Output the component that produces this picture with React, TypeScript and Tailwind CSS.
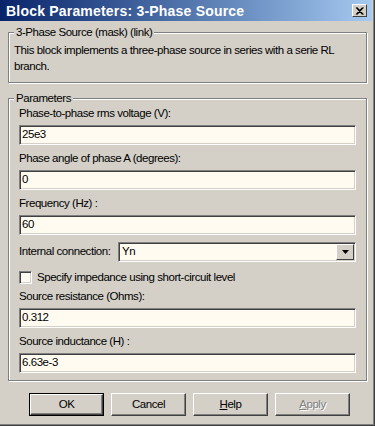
import React from "react";

const FONT = { fontFamily: '"Liberation Sans", Arial, sans-serif' };

// sunken field edge (Win2000 classic)
const sunken =
  "border border-t-[#808080] border-l-[#808080] border-b-white border-r-white shadow-[inset_1px_1px_0_#404040,inset_-1px_-1px_0_#d4d0c8]";

// dialog text: a touch condensed like the original Tahoma rendering
const txt = "text-[11.5px] tracking-[-0.45px] text-black";

function GroupBox({
  title,
  className,
  children,
}: {
  title: string;
  className?: string;
  children: React.ReactNode;
}) {
  return (
    <div
      className={`relative border border-[#808080] shadow-[inset_1px_1px_0_#fff,1px_1px_0_#fff] ${className ?? ""}`}
    >
      {/* legend sits on the etched line */}
      <span className={`absolute -top-[9px] left-[5px] bg-[#d4d0c8] px-[2px] leading-[16px] ${txt}`}>
        {title}
      </span>
      {children}
    </div>
  );
}

function Field({ label, value }: { label: string; value: string }) {
  return (
    <div className="flex flex-col">
      <div className={`h-[16px] leading-[16px] mb-[4px] ${txt}`}>{label}</div>
      <div className={`h-[20px] bg-[#fffbf0] ${sunken} flex items-center px-[2px] ${txt}`}>
        {value}
      </div>
    </div>
  );
}

function Button({
  children,
  isDefault,
}: {
  children: React.ReactNode;
  isDefault?: boolean;
}) {
  return (
    <div className={`w-[75px] h-[23px] ${isDefault ? "border border-black" : ""}`}>
      <div
        className={`h-full w-full bg-[#d4d0c8] border border-t-white border-l-white border-b-[#404040] border-r-[#404040] shadow-[inset_-1px_-1px_0_#808080] flex items-center justify-center ${txt}`}
      >
        {children}
      </div>
    </div>
  );
}

export default function App() {
  return (
    <div
      style={FONT}
      className="w-[375px] h-[426px] bg-[#d4d0c8] flex flex-col border-r border-r-[#404040] border-b border-b-[#404040] shadow-[inset_-1px_-1px_0_#808080] overflow-hidden"
    >
      {/* Title bar */}
      <div className="h-[21px] mr-[2px] flex items-center justify-between bg-gradient-to-r from-[#0a246a] to-[#a6caf0] pl-[6px] pr-[5px]">
        <span className="text-white font-bold text-[14px] tracking-[0.2px] leading-none">
          Block Parameters: 3-Phase Source
        </span>
        <div className="w-[15px] h-[13px] bg-[#d4d0c8] border border-t-white border-l-white border-b-[#404040] border-r-[#404040] flex items-center justify-center">
          <svg width="9" height="8" viewBox="0 0 9 8">
            <path d="M1 0.5 L7.5 7.5 M2 0.5 L8.5 7.5 M7.5 0.5 L1 7.5 M8.5 0.5 L2 7.5" stroke="#000" strokeWidth="1.1" />
          </svg>
        </div>
      </div>

      <div className="flex flex-col px-[8px] pr-[7px]">
        <GroupBox title="3-Phase Source (mask) (link)" className="mt-[11px] h-[51px]">
          <p className={`pl-[5px] pt-[9px] leading-[16px] ${txt}`}>
            This block implements a three-phase source in series with a serie RL
            <br />
            branch.
          </p>
        </GroupBox>

        <GroupBox title="Parameters" className="mt-[15px] h-[283px]">
          <div className="flex flex-col px-[10px] pr-[10px] pt-[6px]">
            <div className="flex flex-col gap-[5px]">
              <Field label="Phase-to-phase rms voltage (V):" value="25e3" />
              <Field label="Phase angle of phase A (degrees):" value="0" />
              <Field label="Frequency (Hz) :" value="60" />
            </div>

            <div className="mt-[7px] flex items-center h-[20px]">
              <span className={`w-[99px] whitespace-nowrap ${txt}`}>Internal connection:</span>
              <div className={`flex-1 h-[20px] bg-[#fffbf0] ${sunken} flex items-center`}>
                <span className={`flex-1 pl-[3px] ${txt}`}>Yn</span>
                <div className="w-[18px] h-[16px] mr-[1px] bg-[#d4d0c8] border border-t-white border-l-white border-b-[#404040] border-r-[#404040] flex items-center justify-center">
                  <svg width="7" height="4" viewBox="0 0 7 4">
                    <path d="M0 0 H7 L3.5 4 Z" fill="#000" />
                  </svg>
                </div>
              </div>
            </div>

            <div className="mt-[9px] flex items-center h-[13px]">
              <div className={`w-[13px] h-[13px] bg-[#fffbf0] ${sunken}`} />
              <span className={`ml-[5px] ${txt}`}>
                Specify impedance using short-circuit level
              </span>
            </div>

            <div className="mt-[4px] flex flex-col gap-[5px]">
              <Field label="Source resistance (Ohms):" value="0.312" />
              <Field label="Source inductance (H) :" value="6.63e-3" />
            </div>
          </div>
        </GroupBox>

        <div className="mt-[12px] flex gap-[7px] pl-[21px]">
          <Button isDefault>OK</Button>
          <Button>Cancel</Button>
          <Button>
            <span>
              <span className="underline">H</span>elp
            </span>
          </Button>
          <Button>
            <span className="text-[#808080] [text-shadow:1px_1px_0_#fff]">
              <span className="underline">A</span>pply
            </span>
          </Button>
        </div>
      </div>
    </div>
  );
}
